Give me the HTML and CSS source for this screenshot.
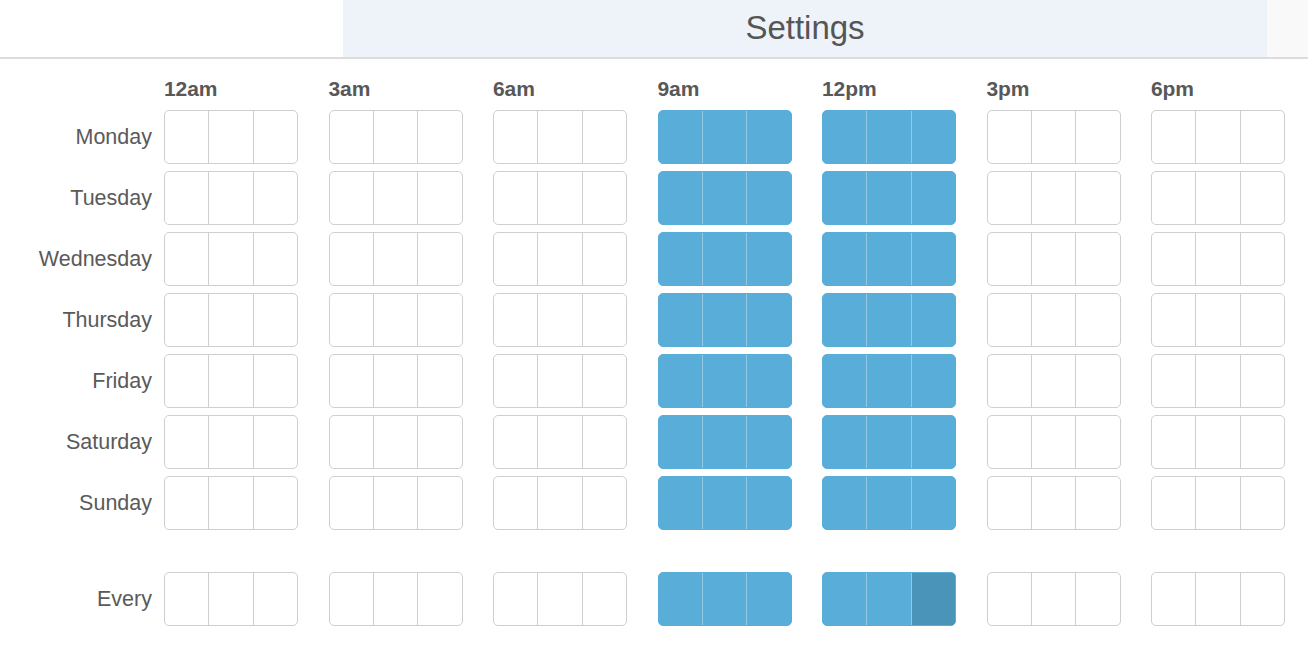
FILE: index.html
```html
<!DOCTYPE html>
<html>
<head>
<meta charset="utf-8">
<link rel="stylesheet" href="styles.css">
</head>
<body>
<div class="header">
  <div class="header-left"></div>
  <div class="header-title">Settings</div>
  <div class="header-right"></div>
</div>
<div class="schedule">
  <div class="row hours">
    <div class="label"></div>
    <div class="blocks">
      <div class="hour">12am</div><div class="hour">3am</div><div class="hour">6am</div><div class="hour">9am</div><div class="hour">12pm</div><div class="hour">3pm</div><div class="hour">6pm</div>
    </div>
  </div>
  <div id="rows"></div>
</div>
<script src="app.js"></script>
</body>
</html>
```
FILE: app.js
```js
const days = ["Monday","Tuesday","Wednesday","Thursday","Friday","Saturday","Sunday","Every"];
const rows = document.getElementById("rows");
days.forEach(d => {
  const row = document.createElement("div");
  row.className = "row day" + (d === "Every" ? " every" : "");
  const lab = document.createElement("div");
  lab.className = "label";
  lab.textContent = d;
  row.appendChild(lab);
  const blocks = document.createElement("div");
  blocks.className = "blocks";
  for (let b = 0; b < 7; b++) {
    const blk = document.createElement("div");
    blk.className = "block" + (b === 3 || b === 4 ? " on" : "");
    for (let c = 0; c < 3; c++) {
      const cell = document.createElement("div");
      cell.className = "cell";
      if (d === "Every" && b === 4 && c === 2) cell.className += " dark";
      blk.appendChild(cell);
    }
    blocks.appendChild(blk);
  }
  row.appendChild(blocks);
  rows.appendChild(row);
});
```
FILE: styles.css
```css
html, body {
  margin: 0;
  padding: 0;
  background: #fff;
  font-family: "Liberation Sans", Arial, sans-serif;
}
.header {
  display: flex;
  height: 57px;
  border-bottom: 2px solid #dcdcdc;
}
.header-left {
  width: 343px;
  background: #fff;
}
.header-title {
  width: 924px;
  background: #eef3f9;
  display: flex;
  align-items: center;
  justify-content: center;
  font-size: 33px;
  color: #555;
  padding-bottom: 1px;
  box-sizing: border-box;
}
.header-right {
  flex: 1;
  background: #f9f9f9;
}
.row {
  display: flex;
  align-items: center;
}
.label {
  width: 152px;
  margin-right: 12px;
  text-align: right;
  font-size: 21.5px;
  color: #5a5a5a;
  flex: none;
}
.blocks {
  display: flex;
  gap: 30.5px;
}
.hours {
  padding-top: 17px;
  margin-bottom: 9px;
}
.hour {
  width: 134px;
  font-size: 21px;
  line-height: 25px;
  font-weight: bold;
  color: #585858;
  letter-spacing: -0.1px;
}
.day {
  margin-bottom: 7px;
}
.every {
  margin-top: 42px;
}
.block {
  width: 134px;
  height: 54px;
  box-sizing: border-box;
  border: 1px solid #cfcfcf;
  border-radius: 5px;
  display: flex;
  overflow: hidden;
  background: #fff;
}
.cell {
  flex: 1;
  border-left: 1px solid #cfcfcf;
}
.cell:first-child {
  border-left: none;
}
.block.on {
  background: #58aed8;
  border-color: #58aed8;
}
.block.on .cell {
  border-left-color: #93c9e4;
}
.block.on .cell:first-child {
  border-left: none;
}
.cell.dark {
  background: #4a93b9;
}
```
